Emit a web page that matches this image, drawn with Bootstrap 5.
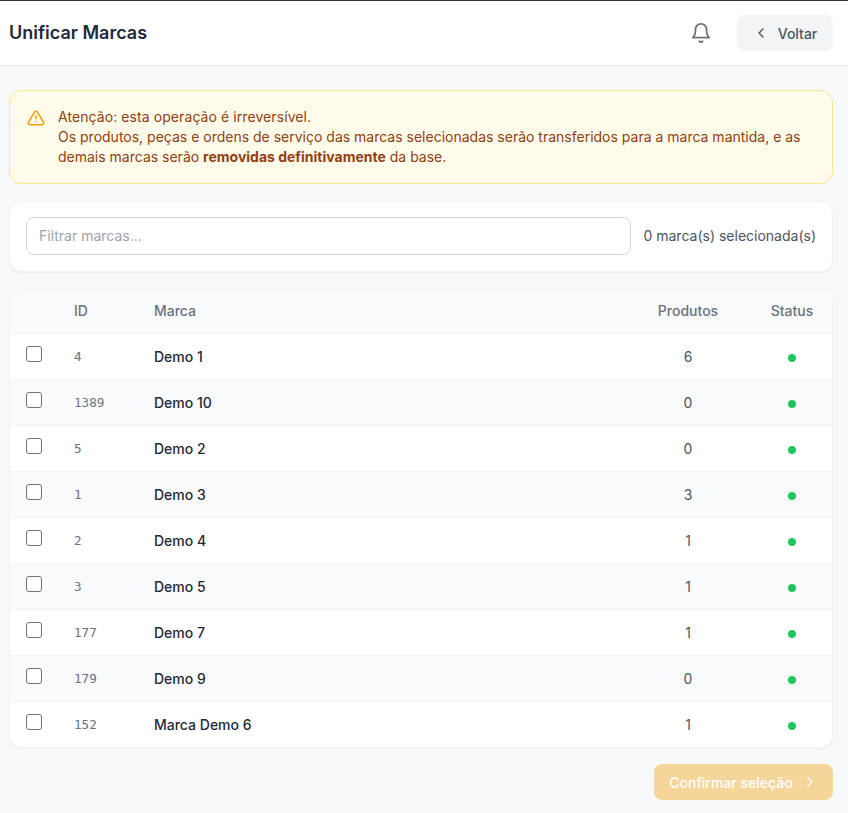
<!DOCTYPE html>
<html lang="pt-BR">
  <head>
    <meta charset="UTF-8" />
    <meta name="viewport" content="width=device-width, initial-scale=1.0" />
    <title>Unificar Marcas</title>
    <link
      rel="stylesheet"
      href="https://cdn.jsdelivr.net/npm/bootstrap@5.3.3/dist/css/bootstrap.min.css"
    />
    <style>
      html, body { height: 100%; }
      body {
        font-family: Inter, "Liberation Sans", sans-serif;
        background: #f8f9fb;
        color: #1f2937;
        font-size: 14px;
      }
      .top-bar {
        height: 66px;
        background: #fff;
        border-top: 1px solid #2f3340;
        border-bottom: 1px solid #e5e7eb;
        padding: 0 15px 0 9px;
      }
      .top-bar h1 { font-size: 18px; font-weight: 600; color: #1f2937; margin: 0; }
      .bell-btn { color: #6b7280; line-height: 0; margin-right: 25px; }
      .back-btn {
        width: 96px; height: 36px;
        background: #f3f4f6;
        border: 0; border-radius: 8px;
        color: #4b5563; font-size: 14px; font-weight: 500;
        gap: 9px;
      }
      .page-body { padding: 24px 15px 0 9px; }
      .warn-box {
        background: #fffbeb;
        border: 1px solid #fde68a;
        border-radius: 12px;
        height: 94px;
        padding: 16px 17px;
        gap: 13px;
        color: #92400e;
        font-size: 14px;
        line-height: 20px;
        margin-bottom: 17px;
      }
      .warn-box svg { flex: none; margin-top: 2px; color: #f59e0b; }
      .warn-box strong { font-weight: 700; }
      .warn-title { letter-spacing: .08px; }
      .white-card {
        background: #fff;
        border: 1px solid #f3f4f6;
        border-radius: 12px;
        box-shadow: 0 1px 2px rgba(0, 0, 0, .05);
      }
      .filter-card { height: 71px; padding: 0 16px 1px; gap: 12px; margin-bottom: 16px; }
      .filter-card .form-control {
        height: 38px;
        border: 1px solid #d1d5db;
        border-radius: 8px;
        font-size: 14px;
        padding: 0 12px 1px;
      }
      .filter-card .form-control::placeholder { color: #9ca3af; }
      .sel-count { color: #4b5563; font-size: 14px; white-space: nowrap; padding-bottom: 1px; }
      .brand-card { overflow: hidden; margin-bottom: 16px; }
      .brand-table { margin: 0; table-layout: fixed; width: 100%; }
      .brand-table th, .brand-table td {
        height: 46px; padding: 0; vertical-align: middle;
        border-bottom: 1px solid #f3f4f6;
        box-shadow: none; background: transparent;
      }
      .brand-table thead th {
        height: 44px;
        background: #f9fafb;
        color: #6b7280; font-size: 14px; font-weight: 500;
        border-bottom: 1px solid #f3f4f6;
      }
      .brand-table tbody tr:nth-child(even) td { background: #f9fafb; }
      .brand-table tbody tr:last-child td { border-bottom: 0; }
      .col-check { width: 64px; padding-left: 16px !important; }
      .col-id { width: 80px; }
      .col-qty { width: 128px; text-align: center; }
      .col-status { width: 80px; text-align: center; }
      .brand-table .form-check-input {
        width: 16px; height: 16px; margin: 0 0 4px; display: block;
        border: 1px solid #6b7280; border-radius: 3px;
      }
      .brand-table td.id-cell { font-family: "DejaVu Sans Mono", monospace; font-size: 12.6px; color: #6b7280; padding-top: 2px; }
      .name-cell { font-weight: 500; color: #1f2937; font-size: 14px; }
      .qty-cell { color: #4b5563; font-size: 14px; }
      .dot { display: inline-block; width: 8px; height: 8px; border-radius: 50%; background: #22c55e; vertical-align: 0; }
      .confirm-btn {
        width: 179px; height: 36px;
        background: #f6d59b;
        border: 0; border-radius: 8px;
        color: #fff; font-size: 14px; font-weight: 500;
        gap: 9px;
      }
    </style>
  </head>
  <body>
    <header class="top-bar d-flex align-items-center justify-content-between">
      <h1>Unificar Marcas</h1>
      <div class="d-flex align-items-center">
        <span class="bell-btn">
          <svg width="22" height="22" viewBox="0 0 24 24" fill="none" stroke="currentColor" stroke-width="2" stroke-linecap="round" stroke-linejoin="round">
            <path d="M6 8a6 6 0 0 1 12 0c0 7 3 9 3 9H3s3-2 3-9" />
            <path d="M10.3 21a1.94 1.94 0 0 0 3.4 0" />
          </svg>
        </span>
        <button class="back-btn d-flex align-items-center justify-content-center">
          <svg width="16" height="16" viewBox="0 0 24 24" fill="none" stroke="currentColor" stroke-width="2" stroke-linecap="round" stroke-linejoin="round">
            <path d="m15 18-6-6 6-6" />
          </svg>
          Voltar
        </button>
      </div>
    </header>

    <main class="page-body">
      <div class="warn-box d-flex">
        <svg width="18" height="18" viewBox="0 0 24 24" fill="none" stroke="currentColor" stroke-width="2" stroke-linecap="round" stroke-linejoin="round">
          <path d="M10.3 3.9 1.8 18a2 2 0 0 0 1.7 3h17a2 2 0 0 0 1.7-3L13.7 3.9a2 2 0 0 0-3.4 0z" />
          <path d="M12 9v4" />
          <path d="M12 17h.01" />
        </svg>
        <div>
          <div class="warn-title">Atenção: esta operação é irreversível.</div>
          <div>Os produtos, peças e ordens de serviço das marcas selecionadas serão transferidos para a marca mantida, e as demais marcas serão <strong>removidas definitivamente</strong> da base.</div>
        </div>
      </div>

      <div class="white-card filter-card d-flex align-items-center">
        <input class="form-control" placeholder="Filtrar marcas..." />
        <span class="sel-count">0 marca(s) selecionada(s)</span>
      </div>

      <div class="white-card brand-card">
        <table class="table brand-table">
          <thead>
            <tr>
              <th class="col-check"></th>
              <th class="col-id">ID</th>
              <th>Marca</th>
              <th class="col-qty">Produtos</th>
              <th class="col-status">Status</th>
            </tr>
          </thead>
          <tbody id="brandRows"></tbody>
        </table>
      </div>

      <div class="d-flex justify-content-end">
        <button class="confirm-btn d-flex align-items-center justify-content-center">
          Confirmar seleção
          <svg width="16" height="16" viewBox="0 0 24 24" fill="none" stroke="currentColor" stroke-width="2" stroke-linecap="round" stroke-linejoin="round">
            <path d="m9 18 6-6-6-6" />
          </svg>
        </button>
      </div>
    </main>

    <script>
      const brands = [
        [4, "Demo 1", 6],
        [1389, "Demo 10", 0],
        [5, "Demo 2", 0],
        [1, "Demo 3", 3],
        [2, "Demo 4", 1],
        [3, "Demo 5", 1],
        [177, "Demo 7", 1],
        [179, "Demo 9", 0],
        [152, "Marca Demo 6", 1],
      ];
      const brandRows = document.querySelector("#brandRows");
      for (let i = 0; i < brands.length; i++) {
        const tr = document.createElement("tr");
        tr.innerHTML = `
          <td class="col-check"><input type="checkbox" class="form-check-input" /></td>
          <td class="id-cell">${brands[i][0]}</td>
          <td class="name-cell">${brands[i][1]}</td>
          <td class="col-qty qty-cell">${brands[i][2]}</td>
          <td class="col-status"><span class="dot"></span></td>
        `;
        brandRows.appendChild(tr);
      }
    </script>
    <script src="https://cdn.jsdelivr.net/npm/bootstrap@5.3.3/dist/js/bootstrap.bundle.min.js"></script>
  </body>
</html>
